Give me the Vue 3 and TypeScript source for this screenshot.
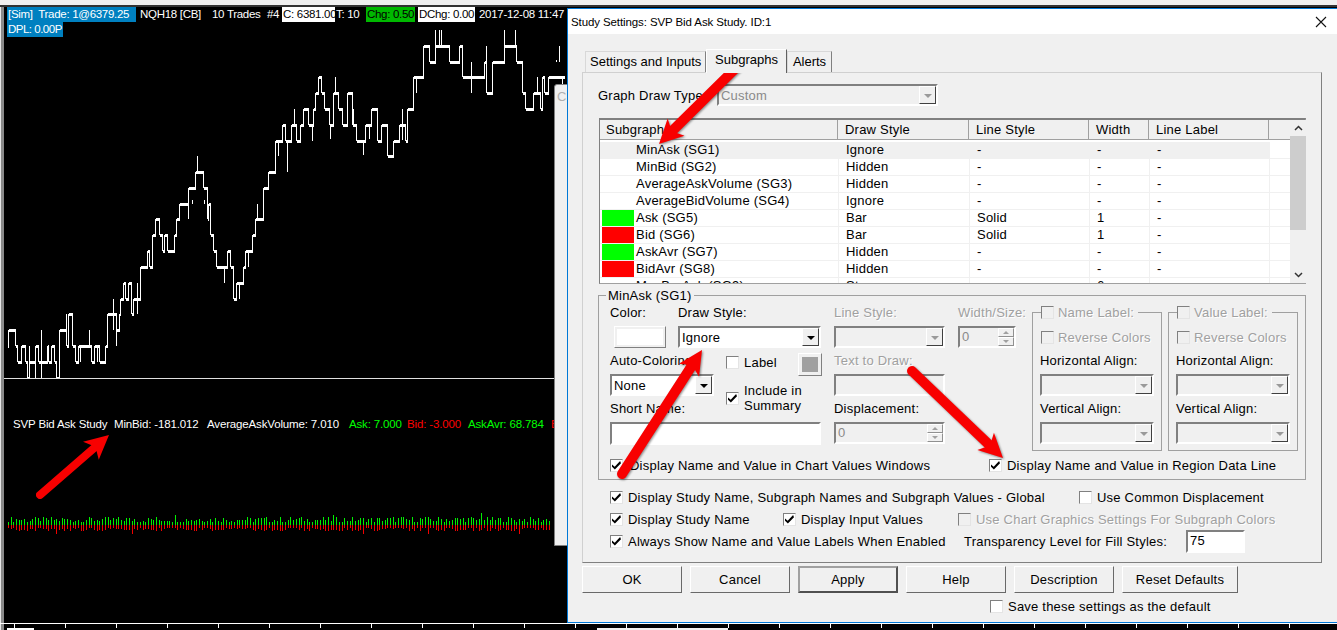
<template>
  <div class="desk">
    <div class="top-strip"></div>

    <!-- chart window behind the dialog -->
    <div class="chart">
      <div class="pane-price">
        <svg class="price-svg" viewBox="4 7 564 371" width="564" height="371" shape-rendering="crispEdges">
          <path :d="riseLines" stroke="#fff" stroke-width="1" fill="none" />
          <path :d="flatLines" stroke="#fff" stroke-width="3" fill="none" />
          <path :d="wickLines" stroke="#fff" stroke-width="1" fill="none" />
        </svg>
        <div class="chart-head">
          <div class="head-row">
            <span
              v-for="item in headItems"
              :key="item.text"
              class="head-item"
              :class="item.kind"
              :style="{ width: item.w + 'px' }"
            >{{ item.text }}</span>
          </div>
          <div class="head-row"><span class="head-item blue dpl">DPL: 0.00P</span></div>
        </div>
      </div>
      <div class="pane-study">
        <div class="study-line">
          <span class="sl-name">SVP Bid Ask Study</span>
          <span class="sl-bid">MinBid: -181.012</span>
          <span class="sl-vol">AverageAskVolume: 7.010</span>
          <span class="sl-ask">Ask: 7.000</span>
          <span class="sl-red">Bid: -3.000</span>
          <span class="sl-avr">AskAvr: 68.784</span>
          <span class="sl-b">B</span>
        </div>
        <svg class="bars" viewBox="0 505 560 40" width="560" height="40" shape-rendering="crispEdges">
          <g v-for="b in bars" :key="b.x">
            <rect :x="b.x" :y="525 - b.up" width="1" :height="b.up" fill="#00f000" />
            <rect :x="b.x" y="525" width="1" :height="b.down" fill="#f00000" />
          </g>
        </svg>
      </div>
      <div class="scale">
        <span class="scale-bar"></span>
        <span class="scale-bar wide"></span>
      </div>
    </div>

    <!-- second window peeking out between chart and dialog -->
    <div class="back-window"><span class="back-text">Cl</span></div>

    <!-- Study Settings dialog -->
    <div class="dialog">
      <div class="titlebar">
        <span>Study Settings: SVP Bid Ask Study. ID:1</span>
        <svg class="close" width="12" height="12" viewBox="0 0 12 12">
          <path d="M1 1 L11 11 M11 1 L1 11" stroke="#111" stroke-width="1.1" fill="none" />
        </svg>
      </div>

      <div class="tabs">
        <span class="tab">Settings and Inputs</span>
        <span class="tab active">Subgraphs</span>
        <span class="tab">Alerts</span>
      </div>

      <div class="tab-panel">
        <div class="draw-type">
          <span class="draw-type-label">Graph Draw Type</span>
          <div class="combo off w-type"><span class="combo-text">Custom</span><span class="drop"></span></div>
        </div>

        <div class="list">
          <div class="list-body">
            <div class="row head">
              <span>Subgraph</span><span>Draw Style</span><span>Line Style</span><span>Width</span><span>Line Label</span><span></span>
            </div>
            <div v-for="(r, i) in rows" :key="r.name" class="row" :class="{ picked: i === 0 }">
              <span class="name-cell">
                <i class="swatch" :class="r.swatch"></i>{{ r.name }}
              </span>
              <span>{{ r.style }}</span>
              <span>{{ r.line }}</span>
              <span>{{ r.width }}</span>
              <span>-</span>
              <span></span>
            </div>
          </div>
          <div class="scrollbar">
            <svg class="sb-arrow" width="9" height="6" viewBox="0 0 9 6"><path d="M1 5 L4.5 1.5 L8 5" stroke="#333" stroke-width="1.5" fill="none" /></svg>
            <div class="sb-thumb"></div>
            <svg class="sb-arrow" width="9" height="6" viewBox="0 0 9 6"><path d="M1 1 L4.5 4.5 L8 1" stroke="#333" stroke-width="1.5" fill="none" /></svg>
          </div>
        </div>

        <div class="group main-group">
          <span class="legend">MinAsk (SG1)</span>
          <div class="group-cols">
            <div class="col col-a">
              <div class="pair">
                <div class="field w-color">
                  <label>Color:</label>
                  <div class="color-btn"><i></i></div>
                </div>
                <div class="field">
                  <label>Draw Style:</label>
                  <div class="combo w-draw"><span class="combo-text">Ignore</span><span class="drop"></span></div>
                </div>
              </div>
              <div class="pair tall">
                <div class="field">
                  <label>Auto-Coloring:</label>
                  <div class="combo w-auto"><span class="combo-text">None</span><span class="drop"></span></div>
                </div>
                <div class="label-box">
                  <div class="label-line">
                    <span class="check"><i class="cb"></i>Label</span>
                    <div class="gray-btn"><i></i></div>
                  </div>
                  <span class="check summary"><i class="cb on"></i>Include in<br />Summary</span>
                </div>
              </div>
              <div class="field">
                <label>Short Name:</label>
                <div class="input w-short"></div>
              </div>
            </div>

            <div class="col col-b">
              <div class="field">
                <label class="dim">Line Style:</label>
                <div class="combo off w-line"><span class="combo-text"></span><span class="drop"></span></div>
              </div>
              <div class="field">
                <label class="dim">Text to Draw:</label>
                <div class="input off w-line"></div>
              </div>
              <div class="field">
                <label>Displacement:</label>
                <div class="input off w-line spin"><span class="spin-text">0</span><span class="spin-btns"><b></b><b class="dn"></b></span></div>
              </div>
            </div>

            <div class="col col-c">
              <div class="field">
                <label class="dim">Width/Size:</label>
                <div class="input off w-size spin"><span class="spin-text">0</span><span class="spin-btns"><b></b><b class="dn"></b></span></div>
              </div>
            </div>

            <div v-for="g in ['Name Label:', 'Value Label:']" :key="g" class="group align-group">
              <span class="legend check dim"><i class="cb off"></i>{{ g }}</span>
              <span class="check dim reverse"><i class="cb off"></i>Reverse Colors</span>
              <div class="field">
                <label>Horizontal Align:</label>
                <div class="combo off w-align"><span class="combo-text"></span><span class="drop"></span></div>
              </div>
              <div class="field">
                <label>Vertical Align:</label>
                <div class="combo off w-align"><span class="combo-text"></span><span class="drop"></span></div>
              </div>
            </div>
          </div>
          <div class="group-foot">
            <span class="check foot-left"><i class="cb on"></i>Display Name and Value in Chart Values Windows</span>
            <span class="check"><i class="cb on"></i>Display Name and Value in Region Data Line</span>
          </div>
        </div>

        <div class="opts">
          <div class="opt-row">
            <span class="check o1"><i class="cb on"></i>Display Study Name, Subgraph Names and Subgraph Values - Global</span>
            <span class="check"><i class="cb"></i>Use Common Displacement</span>
          </div>
          <div class="opt-row">
            <span class="check o2"><i class="cb on"></i>Display Study Name</span>
            <span class="check o3"><i class="cb on"></i>Display Input Values</span>
            <span class="check dim"><i class="cb off"></i>Use Chart Graphics Settings For Subgraph Colors</span>
          </div>
          <div class="opt-row">
            <span class="check o4"><i class="cb on"></i>Always Show Name and Value Labels When Enabled</span>
            <span class="transp">Transparency Level for Fill Styles:</span>
            <div class="input w-transp"><span class="spin-text">75</span></div>
          </div>
        </div>
      </div>

      <div class="buttons">
        <button class="btn">OK</button>
        <button class="btn">Cancel</button>
        <button class="btn default">Apply</button>
        <button class="btn">Help</button>
        <button class="btn">Description</button>
        <button class="btn reset">Reset Defaults</button>
      </div>
      <span class="check save"><i class="cb"></i>Save these settings as the default</span>
    </div>

    <!-- red annotation arrows drawn on top of the screenshot -->
    <svg class="arrows" width="1337" height="630" viewBox="0 0 1337 630">
      <g v-for="(a, i) in arrows" :key="i">
        <line :x1="a.x1" :y1="a.y1" :x2="a.x2" :y2="a.y2" stroke="#f80000" :stroke-width="a.w" stroke-linecap="round" />
        <polygon :points="a.head" fill="#f80000" />
      </g>
    </svg>
  </div>
</template>

<script setup lang="ts">
type Row = { name: string; style: string; line: string; width: string; swatch: string }

const headItems = [
  { text: '[Sim]  Trade: 1@6379.25', w: 129, kind: 'blue' },
  { text: 'NQH18 [CB]', w: 75, kind: 'gap' },
  { text: '10 Trades', w: 55, kind: '' },
  { text: '#4', w: 16, kind: '' },
  { text: 'C: 6381.00', w: 53, kind: 'white' },
  { text: 'T: 10', w: 31, kind: '' },
  { text: 'Chg: 0.50', w: 49, kind: 'green' },
  { text: 'DChg: 0.00', w: 57, kind: 'white after' },
  { text: '2017-12-08 11:47', w: 92, kind: '' },
]

const rows: Row[] = [
  { name: 'MinAsk (SG1)', style: 'Ignore', line: '-', width: '-', swatch: '' },
  { name: 'MinBid (SG2)', style: 'Hidden', line: '-', width: '-', swatch: '' },
  { name: 'AverageAskVolume (SG3)', style: 'Hidden', line: '-', width: '-', swatch: '' },
  { name: 'AverageBidVolume (SG4)', style: 'Ignore', line: '-', width: '-', swatch: '' },
  { name: 'Ask (SG5)', style: 'Bar', line: 'Solid', width: '1', swatch: 'lime' },
  { name: 'Bid (SG6)', style: 'Bar', line: 'Solid', width: '1', swatch: 'red' },
  { name: 'AskAvr (SG7)', style: 'Hidden', line: '-', width: '-', swatch: 'lime' },
  { name: 'BidAvr (SG8)', style: 'Hidden', line: '-', width: '-', swatch: 'red' },
  { name: 'MaxBarAsk (SG9)', style: 'Stars', line: '-', width: '6', swatch: '' },
]

// price line: [x in the 2.75x crop, y on the page]
const steps: number[][] = [
  [20, 346], [23, 330], [40, 346], [48, 362], [57, 346], [70, 362], [73, 378], [81, 362], [97, 346],
  [105, 362], [128, 346], [131, 362], [140, 346], [148, 362], [155, 378], [163, 330], [181, 346],
  [188, 314], [197, 346], [205, 362], [214, 346], [250, 362], [258, 346], [272, 362], [288, 346],
  [295, 314], [318, 330], [327, 314], [330, 299], [337, 283], [345, 299], [353, 283], [361, 314],
  [366, 299], [386, 267], [403, 251], [411, 267], [419, 235], [427, 219], [437, 235], [445, 251],
  [452, 235], [460, 251], [478, 235], [485, 219], [493, 204], [518, 188], [535, 172], [558, 188],
  [568, 219], [572, 204], [577, 235], [585, 251], [593, 267], [625, 251], [633, 267], [642, 299],
  [650, 283], [667, 267], [675, 251], [692, 235], [700, 219], [724, 188], [738, 172], [757, 141],
  [775, 125], [783, 141], [800, 125], [815, 141], [825, 125], [832, 109], [848, 125], [862, 109],
  [865, 93], [875, 77], [882, 93], [890, 109], [905, 125], [915, 93], [930, 109], [940, 125],
  [955, 93], [967, 125], [980, 141], [1005, 125], [1020, 109], [1037, 141], [1047, 125], [1063, 156],
  [1080, 141], [1097, 125], [1113, 141], [1118, 109], [1137, 77], [1162, 46], [1180, 62], [1195, 46],
  [1235, 62], [1262, 46], [1270, 77], [1330, 62], [1337, 93], [1352, 62], [1367, 62], [1385, 46],
  [1420, 62], [1435, 93], [1443, 109], [1467, 93], [1485, 109], [1490, 77], [1495, 93], [1507, 77],
  [1552, 77],
]

const wicks: number[][] = [
  [81, 346, 378], [97, 362, 378], [114, 330, 378], [181, 314, 346], [221, 346, 362], [245, 330, 346],
  [267, 346, 362], [312, 299, 330], [320, 330, 346], [378, 283, 314], [386, 267, 299], [518, 204, 219],
  [527, 200, 204], [560, 200, 204], [617, 267, 283], [657, 283, 299], [683, 251, 267], [708, 204, 219],
  [543, 156, 172], [765, 141, 156], [790, 141, 172], [808, 109, 125], [858, 125, 141], [907, 125, 139],
  [922, 77, 93], [970, 109, 125], [997, 141, 155], [1015, 125, 139], [1105, 109, 140], [1145, 78, 93],
  [1197, 30, 46], [1207, 30, 46], [1213, 30, 46], [1295, 62, 93], [1337, 46, 93], [1385, 30, 46],
  [1417, 30, 46], [1477, 77, 93], [1490, 77, 109], [1538, 46, 62], [1545, 77, 87], [1530, 60, 62],
]

const px = (zx: number) => Math.round(zx / 2.75) + 0.5

let flat = ''
let rise = ''
steps.forEach(([x, y], i) => {
  const next = steps[i + 1]
  if (!next) return
  flat += `M${px(x)} ${y}H${px(next[0])}`
  rise += `M${px(next[0])} ${y}V${next[1]}`
})
const flatLines = flat
const riseLines = rise
const wickLines = wicks.map(([x, a, b]) => `M${px(x)} ${a}V${b}`).join('')

// volume bars, pseudo random but stable
const bars = Array.from({ length: 202 }, (_, i) => {
  const s = Math.sin(i * 12.9898) * 43758.5453
  const t = Math.sin(i * 78.233) * 12543.123
  let up = 3 + Math.floor((s - Math.floor(s)) * 6)
  let down = 3 + Math.floor((t - Math.floor(t)) * 4)
  if (i === 62 || i === 121) up = 10
  if (i === 176) up = 12
  if (i === 18 || i === 46 || i === 132 || i === 156 || i === 190) down = 9
  return { x: Math.round(8 + i * 2.69), up, down }
})

// tail to tip, the head gets swept back corners
function makeArrow(x1: number, y1: number, x2: number, y2: number, w: number) {
  const len = Math.hypot(x2 - x1, y2 - y1)
  const ux = (x2 - x1) / len
  const uy = (y2 - y1) / len
  const bx = x2 - ux * 24
  const by = y2 - uy * 24
  const head = [
    `${x2},${y2}`,
    `${bx - uy * 12},${by + ux * 12}`,
    `${x2 - ux * 18},${y2 - uy * 18}`,
    `${bx + uy * 12},${by - ux * 12}`,
  ].join(' ')
  return { x1, y1, x2: x2 - ux * 14, y2: y2 - uy * 14, head, w }
}

const arrows = [
  makeArrow(40, 495, 109, 435, 8),
  makeArrow(737, 67, 659, 144, 10),
  makeArrow(622, 474, 702, 350, 10),
  makeArrow(912, 371, 1003, 458, 10),
]
</script>

<style>
html,
body {
  margin: 0;
  background: #000;
}
</style>

<style scoped>
.desk {
  position: relative;
  width: 1337px;
  height: 630px;
  overflow: hidden;
  background: #000;
  font-family: "Liberation Sans", Arial, sans-serif;
  font-size: 13px;
  color: #000;
}

.top-strip {
  height: 5px;
  background: #f0f0f0;
  border-bottom: 2px solid #333;
}

.chart {
  width: 568px;
  border-left: 1px solid #e8e8e8;
  box-shadow: inset 3px 0 0 #8a8a8a;
  padding-left: 3px;
  box-sizing: border-box;
  background: #000;
}

.pane-price {
  position: relative;
  height: 371px;
  width: 564px;
  border-bottom: 1px solid #e0e0e0;
}

.price-svg {
  display: block;
}

.chart-head {
  position: absolute;
  left: 3px;
  top: 0;
  font-size: 11.5px;
  line-height: 15px;
  letter-spacing: -0.3px;
  color: #fff;
  white-space: pre;
}

.head-row {
  display: flex;
  height: 15px;
}

.head-item {
  display: block;
  flex: none;
  overflow: hidden;
  box-sizing: border-box;
  padding-left: 1px;
}

.head-item.blue {
  background: #0080c0;
}

.head-item.gap {
  padding-left: 4px;
}

.head-item.white {
  background: #fff;
  color: #000;
}

.head-item.green {
  background: #00b800;
  color: #000;
}

.head-item.after {
  margin-left: 3px;
  margin-right: 3px;
}

.dpl {
  width: 56px;
  letter-spacing: -0.5px;
}

.pane-study {
  height: 244px;
}

.study-line {
  display: flex;
  height: 15px;
  padding-top: 38px;
  font-size: 11.5px;
  line-height: 15px;
  letter-spacing: -0.15px;
  color: #fff;
  white-space: nowrap;
}

.study-line span {
  flex: none;
}

.sl-name {
  margin-left: 9px;
  width: 101px;
}

.sl-bid {
  width: 93px;
}

.sl-vol {
  width: 142px;
}

.sl-ask {
  width: 58px;
  color: #00ff00;
}

.sl-red {
  width: 61px;
  color: #ff0000;
}

.sl-avr {
  width: 83px;
  color: #00ff00;
}

.sl-b {
  color: #ff0000;
}

.bars {
  display: block;
  margin-top: 73px;
  margin-left: -4px;
}

.scale {
  display: flex;
  height: 7px;
  width: 1337px;
  border-top: 1px solid #fff;
  margin-left: -4px;
  background-image: repeating-linear-gradient(to right, #fff 0 1px, transparent 1px 51px);
  background-size: 100% 4px;
  background-repeat: no-repeat;
  background-position: 14px 0;
  align-items: flex-end;
}

.scale-bar {
  display: block;
  height: 3px;
  width: 27px;
  margin-left: 7px;
  background: #fff;
}

.scale-bar.wide {
  width: 131px;
  margin-left: 563px;
  background: #f0f0f0;
}

.back-window {
  position: absolute;
  left: 554px;
  top: 84px;
  width: 40px;
  height: 462px;
  box-sizing: border-box;
  background: #f0f0f0;
  border: 1px solid #808080;
  border-radius: 3px 3px 0 0;
  padding: 4px 2px;
  color: #b0b0b0;
}

.back-text {
  font-size: 13px;
}

.dialog {
  position: absolute;
  left: 567px;
  top: 8px;
  width: 790px;
  height: 615px;
  box-sizing: border-box;
  background: #f0f0f0;
  border: 1px solid #0078d7;
  letter-spacing: 0.22px;
}

.titlebar {
  display: flex;
  align-items: center;
  justify-content: space-between;
  height: 25px;
  background: #fff;
  padding-left: 3px;
  box-sizing: border-box;
  width: 769px;
  font-size: 11.5px;
  letter-spacing: -0.1px;
}

.close {
  margin-right: 10px;
}

.tabs {
  display: flex;
  align-items: flex-end;
  height: 23px;
  margin-top: 15px;
  margin-left: 17px;
  position: relative;
  z-index: 1;
  letter-spacing: 0;
}

.tab {
  height: 21px;
  line-height: 20px;
  box-sizing: border-box;
  padding: 0 4px;
  width: 121px;
  text-align: center;
  border: 1px solid #d8d8d8;
  border-bottom: none;
  border-right: 1px solid #808080;
  background: #f0f0f0;
  white-space: nowrap;
}

.tab:last-child {
  width: 45px;
  padding: 0;
}

.tab.active {
  height: 24px;
  line-height: 20px;
  width: 81px;
  margin-bottom: -1px;
  background: #f0f0f0;
  border-color: #fff #606060 #f0f0f0 #fff;
}

.tab-panel {
  margin-left: 14px;
  width: 740px;
  height: 491px;
  box-sizing: border-box;
  padding-left: 15px;
  padding-top: 11px;
  border: 1px solid;
  border-color: #d0d0d0 #808080 #808080 #d0d0d0;
}

.draw-type {
  display: flex;
  align-items: center;
}

.draw-type-label {
  width: 119px;
}

.combo {
  display: flex;
  box-sizing: border-box;
  height: 22px;
  background: #fff;
  border: 2px solid;
  border-color: #808080 #fff #fff #808080;
}

.combo.off {
  background: #f0f0f0;
  color: #8a8a8a;
}

.combo-text {
  flex: 1;
  padding-left: 2px;
  line-height: 19px;
}

.drop {
  position: relative;
  flex: none;
  width: 17px;
  box-sizing: border-box;
  background: #f0f0f0;
  border: 1px solid;
  border-color: #fff #404040 #404040 #fff;
}

.drop::after {
  content: "";
  position: absolute;
  left: 4px;
  top: 7px;
  border: 4px solid transparent;
  border-top: 4px solid #000;
  border-bottom: none;
}

.combo.off .drop::after {
  border-top-color: #9a9a9a;
}

.w-type {
  width: 221px;
}

.w-draw {
  width: 143px;
}

.w-auto {
  width: 104px;
}

.w-line {
  width: 111px;
}

.w-size {
  width: 58px;
}

.w-align {
  width: 114px;
}

.w-short {
  width: 211px;
}

.w-transp {
  width: 59px;
  height: 23px;
}

.list {
  display: flex;
  box-sizing: border-box;
  width: 707px;
  height: 166px;
  margin-top: 12px;
  margin-left: 1px;
  background: #fff;
  border: 1px solid #a0a0a0;
  border-top: 2px solid #808080;
  border-left: 1px solid #808080;
}

.list-body {
  flex: none;
  width: 690px;
  overflow: hidden;
}

.row {
  display: grid;
  grid-template-columns: 238px 131px 120px 60px 120px 21px;
  height: 17px;
  box-sizing: border-box;
  border-bottom: 1px solid #f0f0f0;
  line-height: 16px;
  white-space: nowrap;
}

.row > span {
  padding-left: 7px;
  border-left: 1px solid #f0f0f0;
  box-sizing: border-box;
}

.row > span:first-child {
  border-left: none;
}

.row > span.name-cell {
  display: flex;
  padding-left: 2px;
}

.row.picked {
  background: #f0f0f0;
}

.row.picked > span:last-child {
  background: #fff;
}

.row.head {
  height: 20px;
  margin-bottom: 2px;
  background: #f0f0f0;
  border-bottom: 1px solid #a0a0a0;
  line-height: 19px;
}

.row.head > span {
  border-left: none;
  border-right: 1px solid #a0a0a0;
}

.row.head > span:first-child {
  padding-left: 6px;
}

.row.head > span:last-child {
  border-right: none;
}

.swatch {
  display: block;
  flex: none;
  width: 32px;
  height: 16px;
  margin-right: 2px;
}

.swatch.lime {
  background: #00ff00;
}

.swatch.red {
  background: #ff0000;
}

.scrollbar {
  flex: none;
  width: 16px;
  background: #f0f0f0;
  display: flex;
  flex-direction: column;
  align-items: center;
}

.sb-arrow {
  flex: none;
  margin: 5px 0;
}

.sb-thumb {
  width: 100%;
  height: 94px;
  margin-bottom: auto;
  background: #cdcdcd;
}

.group {
  position: relative;
  box-sizing: border-box;
  border: 1px solid #a0a0a0;
}

.legend {
  position: absolute;
  top: -8px;
  left: 7px;
  padding: 0 2px;
  background: #f0f0f0;
  line-height: 15px;
  white-space: nowrap;
}

.main-group {
  width: 708px;
  height: 185px;
  margin-top: 11px;
  padding: 9px 0 0 11px;
}

.group-cols {
  display: flex;
}

.col {
  flex: none;
  display: flex;
  flex-direction: column;
  gap: 5px;
}

.col-a {
  width: 211px;
}

.col-b {
  width: 111px;
  margin-left: 13px;
}

.col-c {
  width: 58px;
  margin-left: 13px;
}

.pair {
  display: flex;
}

.pair.tall {
  height: 43px;
}

.w-color {
  width: 68px;
}

.field label {
  display: block;
  height: 16px;
  line-height: 16px;
  margin-bottom: 5px;
  white-space: nowrap;
}

.dim {
  color: #a0a0a0;
  text-shadow: 1px 1px 0 #fff;
}

.color-btn {
  box-sizing: border-box;
  width: 52px;
  height: 22px;
  margin-left: 4px;
  padding: 2px;
  background: #f0f0f0;
  border: 1px solid;
  border-color: #fff #808080 #808080 #fff;
}

.color-btn i,
.gray-btn i {
  display: block;
  height: 100%;
  background: #fff;
}

.gray-btn {
  box-sizing: border-box;
  width: 24px;
  height: 23px;
  padding: 3px;
  background: #f0f0f0;
  border: 1px solid;
  border-color: #fff #808080 #808080 #fff;
}

.gray-btn i {
  background: #a0a0a0;
}

.input {
  box-sizing: border-box;
  height: 23px;
  background: #fff;
  border: 2px solid;
  border-color: #808080 #fff #fff #808080;
}

.input.off {
  background: #f0f0f0;
  color: #8a8a8a;
}

.w-line.input,
.w-size.input {
  height: 22px;
}

.spin {
  display: flex;
}

.spin-text {
  flex: 1;
  display: block;
  padding-left: 2px;
  line-height: 18px;
}

.spin-btns {
  display: flex;
  flex-direction: column;
  flex: none;
  width: 16px;
}

.spin-btns b {
  position: relative;
  flex: 1;
  background: #f0f0f0;
  border: 1px solid;
  border-color: #fff #909090 #909090 #fff;
}

.spin-btns b::after {
  content: "";
  position: absolute;
  left: 4px;
  top: 2px;
  border: 3px solid transparent;
  border-top: none;
  border-bottom: 3px solid #a0a0a0;
}

.spin-btns b.dn::after {
  border-bottom: none;
  border-top: 3px solid #a0a0a0;
}

.label-box {
  display: flex;
  flex-direction: column;
  align-items: flex-start;
  margin-left: 12px;
}

.label-line {
  display: flex;
  justify-content: space-between;
  width: 96px;
  height: 23px;
}

.label-line .check {
  height: 18px;
}

.check {
  display: inline-flex;
  align-items: center;
  white-space: nowrap;
  line-height: 15px;
}

.check.summary {
  margin-top: 7px;
}

.cb {
  position: relative;
  display: block;
  flex: none;
  box-sizing: border-box;
  width: 13px;
  height: 13px;
  margin-right: 5px;
  background: #fff;
  border: 1px solid;
  border-color: #808080 #e4e4e4 #e4e4e4 #808080;
}

.cb.off {
  background: #f0f0f0;
}

.cb.on::after {
  content: "";
  position: absolute;
  inset: 1px;
  background: #000;
  clip-path: polygon(0 45%, 30% 70%, 90% 5%, 100% 30%, 32% 100%, 0 70%);
}

.align-group {
  flex: none;
  width: 130px;
  height: 139px;
  margin-top: 7px;
  margin-left: 16px;
  padding: 16px 0 0 7px;
  display: flex;
  flex-direction: column;
  gap: 0;
}

.align-group + .align-group {
  margin-left: 6px;
}

.align-group .legend {
  left: 8px;
  top: -8px;
  padding: 0 4px 0 0;
}

.align-group .legend .cb,
.reverse .cb {
  margin-right: 4px;
}

.reverse {
  margin-left: 1px;
  height: 16px;
  margin-bottom: 8px;
}

.align-group .field + .field {
  margin-top: 5px;
}

.group-foot {
  display: flex;
  margin-top: 6px;
  height: 16px;
}

.foot-left {
  width: 379px;
}

.foot-left .cb {
  margin-right: 7px;
}

.opts {
  margin-top: 6px;
  padding-left: 12px;
}

.opt-row {
  display: flex;
  align-items: center;
  height: 22px;
}

.o1 {
  width: 469px;
}

.o2 {
  width: 173px;
}

.o3 {
  width: 175px;
}

.o4 {
  width: 354px;
}

.transp {
  width: 222px;
  white-space: nowrap;
}

.buttons {
  display: flex;
  gap: 8px;
  margin-top: 3px;
  margin-left: 14px;
}

.btn {
  box-sizing: border-box;
  width: 100px;
  height: 27px;
  padding: 0;
  font: inherit;
  letter-spacing: inherit;
  color: #000;
  background: #f0f0f0;
  border: 1px solid;
  border-color: #fff #696969 #696969 #fff;
}

.btn.default {
  border: 2px solid;
  border-color: #a0a0a0 #505050 #505050 #a0a0a0;
}

.btn.reset {
  width: 116px;
}

.save {
  margin-top: 5px;
  margin-left: 422px;
  display: flex;
  height: 16px;
}

.arrows {
  position: absolute;
  left: 0;
  top: 0;
  pointer-events: none;
  filter: drop-shadow(1px 1px 1px rgba(0, 0, 0, 0.45));
}
</style>
